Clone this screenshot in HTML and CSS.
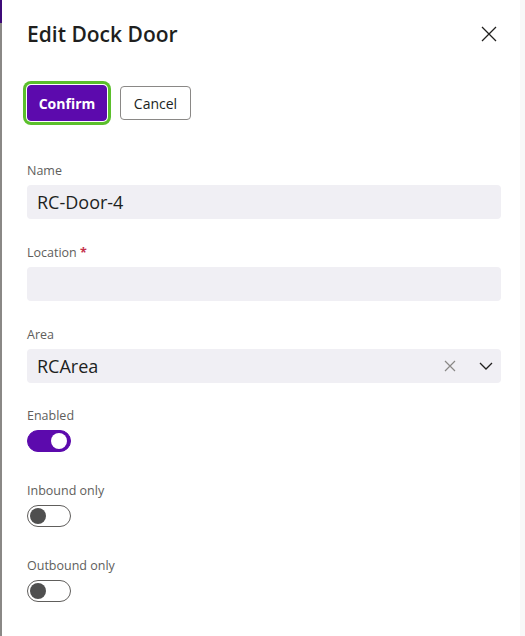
FILE: index.html
```html
<!DOCTYPE html>
<html lang="en">
<head>
<meta charset="utf-8">
<title>Edit Dock Door</title>
<link rel="stylesheet" href="styles.css">
</head>
<body>
<div class="page">
  <div class="edge"></div>
  <div class="panel">
    <div class="header">
      <h1 class="title">Edit Dock Door</h1>
      <button class="close" aria-label="Close">
        <svg width="16" height="16" viewBox="0 0 16 16"><path d="M1 1L15 15M15 1L1 15" stroke="#201f1e" stroke-width="1.3" fill="none"/></svg>
      </button>
    </div>
    <div class="actions">
      <button class="btn btn-primary">Confirm</button>
      <button class="btn btn-default">Cancel</button>
    </div>
    <form class="form">
      <div class="field">
        <label class="label">Name</label>
        <div class="input"><span class="value">RC-Door-4</span></div>
      </div>
      <div class="field">
        <label class="label">Location <span class="req">*</span></label>
        <div class="input"></div>
      </div>
      <div class="field field-last">
        <label class="label">Area</label>
        <div class="input combo">
          <span class="value">RCArea</span>
          <span class="icons">
            <svg class="clear" width="12" height="12" viewBox="0 0 12 12"><path d="M1 1L11 11M11 1L1 11" stroke="#8a8886" stroke-width="1.2" fill="none"/></svg>
            <svg class="chev" width="14" height="8" viewBox="0 0 14 8"><path d="M1 1L7 7L13 1" stroke="#201f1e" stroke-width="1.3" fill="none"/></svg>
          </span>
        </div>
      </div>
      <div class="field toggle-field">
        <label class="label">Enabled</label>
        <span class="toggle on"><span class="knob"></span></span>
      </div>
      <div class="field toggle-field">
        <label class="label">Inbound only</label>
        <span class="toggle"><span class="knob"></span></span>
      </div>
      <div class="field toggle-field">
        <label class="label">Outbound only</label>
        <span class="toggle"><span class="knob"></span></span>
      </div>
    </form>
  </div>
  <div class="scroll"></div>
</div>
</body>
</html>
```
FILE: styles.css
```css
html, body {
  margin: 0;
  padding: 0;
  background: #ffffff;
  font-family: "Open Sans", "Noto Sans", sans-serif;
  color: #201f1e;
}
.page {
  display: flex;
  width: 525px;
  height: 636px;
  overflow: hidden;
}
.edge {
  width: 2px;
  flex: none;
  background: linear-gradient(to bottom, #3d0a78 0, #3d0a78 23px, #8a8886 23px, #8a8886 100%);
}
.panel {
  flex: 1;
  padding: 20px 0 0 25px;
}
.scroll {
  width: 5px;
  flex: none;
  background: #f8f8f8;
}
.header {
  display: flex;
  justify-content: space-between;
  align-items: center;
  padding-right: 23px;
}
.title {
  margin: 0;
  font-size: 21px;
  line-height: 28px;
  font-weight: 600;
}
.close {
  border: 0;
  background: none;
  padding: 0;
  width: 16px;
  height: 16px;
  display: flex;
}
.actions {
  display: flex;
  align-items: center;
  gap: 13px;
  margin-top: 37px;
}
.btn {
  font-family: inherit;
  font-size: 14px;
  cursor: pointer;
}
.btn-primary {
  height: 36px;
  width: 80px;
  background: #5c0aad;
  color: #ffffff;
  font-weight: 700;
  border: 1px solid #5c0aad;
  box-shadow: 0 0 0 1px #ffffff, 0 0 0 4px #5bbf2c;
  border-radius: 4px;
}
.btn-default {
  height: 34px;
  width: 71px;
  background: #ffffff;
  color: #201f1e;
  border: 1px solid #8a8886;
  border-radius: 4px;
}
.form {
  display: flex;
  flex-direction: column;
  margin-top: 41px;
  padding-right: 19px;
}
.field {
  display: flex;
  flex-direction: column;
  gap: 5px;
  margin-bottom: 25px;
}
.field-last {
  margin-bottom: 24px;
}
.toggle-field {
  margin-bottom: 30px;
}
.label {
  font-size: 12.5px;
  line-height: 18px;
  color: #605e5c;
}
.req {
  color: #c4314b;
  font-weight: 700;
}
.input {
  height: 34px;
  background: #f0eff4;
  border-radius: 4px;
  display: flex;
  align-items: center;
  padding: 0 10px;
}
.value {
  font-size: 18px;
  color: #201f1e;
}
.combo {
  justify-content: space-between;
  padding-right: 8px;
}
.icons {
  display: flex;
  align-items: center;
  gap: 23px;
}
.toggle {
  width: 44px;
  height: 22px;
  box-sizing: border-box;
  border: 1px solid #605e5c;
  border-radius: 11px;
  display: flex;
  align-items: center;
  padding: 0 2px;
}
.toggle .knob {
  width: 16px;
  height: 16px;
  border-radius: 50%;
  background: #4f4f4f;
}
.toggle.on {
  background: #5c0aad;
  border-color: #5c0aad;
  justify-content: flex-end;
  padding: 0 3px;
}
.toggle.on .knob {
  background: #ffffff;
}
```
